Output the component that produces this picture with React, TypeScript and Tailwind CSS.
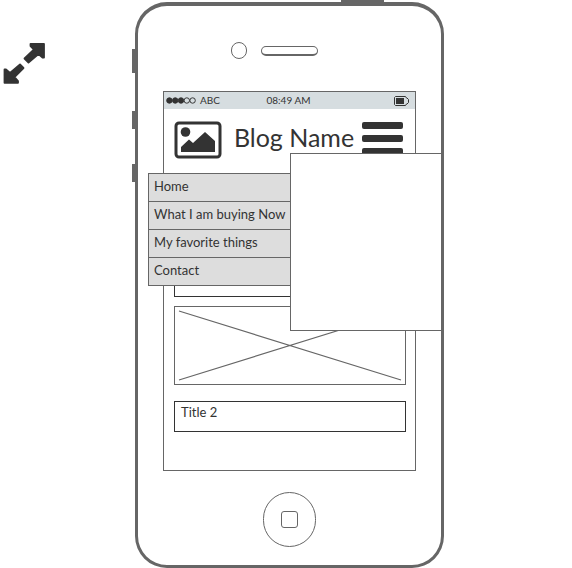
const menuItems = ["Home", "What I am buying Now", "My favorite things", "Contact"];
const signal = [true, true, true, false, false];

function ExpandIcon() {
  return (
    <svg viewBox="0 0 42 42" className="h-[42px] w-[42px]" fill="#333333" stroke="#333333" strokeLinejoin="round" aria-hidden="true">
      <path d="M27.500 2H41V15.500H39.500L35.500 12L25.500 20.500L21.500 16.500L31 7.500L27.500 4Z" strokeWidth="1.800" />
      <path d="M1.500 27.500H3L7 31L17 22.500L20.500 26L11.500 35L15 39V40.800H1.500Z" strokeWidth="1.800" />
    </svg>
  );
}

function PictureIcon() {
  return (
    <svg viewBox="0 0 48 38" className="h-[38px] w-12 shrink-0" fill="#333333" aria-hidden="true">
      <rect x="2" y="2" width="44" height="34" rx="3" fill="none" stroke="#333333" strokeWidth="3" />
      <circle cx="11.500" cy="11" r="4.800" />
      <path d="M7 31V26L15 18.500L19 22L31 11L41 20V31Z" />
    </svg>
  );
}

function StatusBar() {
  return (
    <div className="grid h-[17px] grid-cols-3 items-center bg-[#d6dde0] pr-[6px] pl-[2px] text-[10px] leading-[17px]">
      <div className="flex items-center gap-1">
        <svg viewBox="0 0 31 7" className="h-[7px] w-[30px]" stroke="#333333" aria-hidden="true">
          {signal.map((on, i) => (
            <circle key={i} cx={3.5 + i * 6} cy="3.500" r="2.800" fill={on ? "#333333" : "none"} />
          ))}
        </svg>
        <span>ABC</span>
      </div>
      <span className="pl-[2px] text-center whitespace-nowrap">08:49 AM</span>
      <svg viewBox="0 0 15 10" className="h-[10px] w-[15px] justify-self-end" fill="none" stroke="#333333" aria-hidden="true">
        <path d="M1.500 0.500H11.500L12.500 2H13L14.500 3.500V6.500L13 8H12.500L11.500 9.500H1.500L0.500 8.500V1.500Z" />
        <rect x="2" y="2" width="8" height="6" fill="#333333" stroke="none" />
      </svg>
    </div>
  );
}

function Screen() {
  return (
    <main className="relative mx-[25px] mt-8 flex h-[380px] flex-col border border-[#666666]">
      <StatusBar />
      <header className="flex items-start justify-between pt-3 pr-3 pl-[10px]">
        <PictureIcon />
        <h1 className="pl-1 text-[25px] leading-[32px] whitespace-nowrap">Blog Name</h1>
        <button type="button" aria-label="Open menu" className="flex w-[41px] shrink-0 flex-col gap-[6px] pt-px">
          <span className="h-[7px] w-full rounded-xs bg-[#333333]" />
          <span className="h-[7px] w-full rounded-xs bg-[#333333]" />
          <span className="h-[7px] w-full rounded-xs bg-[#333333]" />
        </button>
      </header>
      <div className="mt-auto flex flex-col pr-[9px] pb-[38px] pl-[10px]">
        <div className="h-[31px] border border-[#333333]" />
        <svg viewBox="0 0 230 77" className="mt-[9px] h-[79px] w-full border border-[#666666]" preserveAspectRatio="none" stroke="#666666" aria-hidden="true">
          <path d="M4 4L226 73M4 73L226 4" strokeWidth="1.200" />
        </svg>
        <h2 className="mt-4 h-[31px] border border-[#333333] px-[6px] text-[13px] leading-5">Title 2</h2>
      </div>
      <nav className="absolute top-[81px] -left-4 w-[143px] border border-[#666666] bg-[#dddddd]">
        <ul className="divide-y divide-[#666666]">
          {menuItems.map((item) => (
            <li key={item} className="h-7 px-[5px] text-[13px] leading-[25px] whitespace-nowrap last:h-[27px]">
              <a href="#">{item}</a>
            </li>
          ))}
        </ul>
      </nav>
      <div className="absolute top-[61px] -right-[26px] left-[126px] h-[178px] border-y border-l border-[#666666] bg-white" />
    </main>
  );
}

export default function App() {
  return (
    <div className="flex bg-white font-['Lato','Liberation_Sans',sans-serif] text-[#333333]">
      <div className="w-[135px] shrink-0 pt-[42px] pl-[3px]">
        <button type="button" aria-label="Expand" className="block">
          <ExpandIcon />
        </button>
      </div>
      <div className="pt-[2px]">
        <div className="relative w-[309px] rounded-[32px] border-[3px] border-t-4 border-[#666666] bg-white pb-[18px]">
          <span className="absolute -top-[6px] right-[57px] h-[3px] w-[43px] bg-[#666666]" />
          <span className="absolute top-[43px] -left-[6px] h-6 w-[3px] bg-[#666666]" />
          <span className="absolute top-[105px] -left-[6px] h-[18px] w-[3px] bg-[#666666]" />
          <span className="absolute top-[158px] -left-[6px] h-[18px] w-[3px] bg-[#666666]" />
          <div className="flex items-center gap-[14px] pt-9 pl-[93px]">
            <span className="h-[17px] w-4 rounded-full border border-[#666666]" />
            <span className="h-[10px] w-[57px] rounded-full border border-b-2 border-[#666666]" />
          </div>
          <Screen />
          <div className="mt-[21px] flex justify-center">
            <button type="button" aria-label="Home" className="flex h-[55px] w-[53px] items-center justify-center rounded-full border border-[#666666]">
              <span className="h-[17px] w-[17px] rounded-[3px] border border-[#666666]" />
            </button>
          </div>
        </div>
      </div>
    </div>
  );
}
